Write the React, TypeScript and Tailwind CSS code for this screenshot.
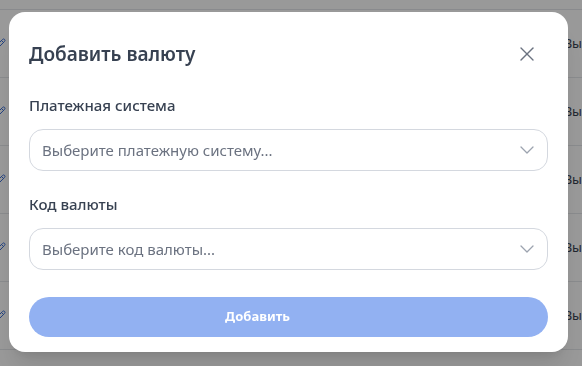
import { X, ChevronDown, Pencil } from 'lucide-react';

const rows = [0, 1, 2, 3, 4];

function SelectBox({ placeholder }: { placeholder: string }) {
  return (
    <button
      type="button"
      className="flex h-[42px] w-full items-center justify-between rounded-[14px] border border-[#d4d8df] bg-white pl-3 pr-2 text-left"
    >
      <span className="text-[15px] text-[#6b7280]">{placeholder}</span>
      <ChevronDown className="h-6 w-6 text-[#9ca3af]" strokeWidth={1.3} />
    </button>
  );
}

export default function App() {
  return (
    <div
      className="relative h-[366px] w-[582px] overflow-hidden bg-white"
      style={{ fontFamily: '"Noto Sans", "Open Sans", Arial, sans-serif' }}
    >
      {/* Page behind the overlay */}
      <div className="pt-[9px]">
        {rows.map((r) => (
          <div
            key={r}
            className="flex h-[69px] items-center justify-between border-b border-t border-[#e5e7eb] -mb-px"
          >
            <Pencil className="-ml-[6px] h-3 w-3 text-[#3b6fd6]" />
            <span className="whitespace-nowrap text-[13px] text-[#374151]">Вы</span>
          </div>
        ))}
      </div>

      {/* Overlay */}
      <div className="fixed inset-0 flex items-start bg-black/40 pl-[9px] pt-[12px]">
        <div className="w-[559px] rounded-2xl bg-white px-5 pb-[15px] pt-6 shadow-xl">
          {/* Header */}
          <div className="flex h-9 items-center justify-between">
            <h2 className="text-[19px] font-semibold text-[#374151]">Добавить валюту</h2>
            <button type="button" className="mr-[3px] flex h-9 w-9 items-center justify-center">
              <X className="h-6 w-6 text-[#6b7280]" strokeWidth={1.4} />
            </button>
          </div>

          {/* Fields */}
          <div className="mt-[22px]">
            <label className="block text-[15px] font-medium leading-[22px] text-[#374151]">
              Платежная система
            </label>
            <div className="mt-[13px]">
              <SelectBox placeholder="Выберите платежную систему..." />
            </div>
          </div>

          <div className="mt-[22px]">
            <label className="block text-[15px] font-medium leading-[22px] text-[#374151]">
              Код валюты
            </label>
            <div className="mt-[13px]">
              <SelectBox placeholder="Выберите код валюты..." />
            </div>
          </div>

          <button
            type="button"
            disabled
            className="mt-[27px] flex h-10 w-full items-center justify-center rounded-[20px] bg-[#92b1f2] pr-[62px] text-[13px] font-bold text-white"
          >
            Добавить
          </button>
        </div>
      </div>
    </div>
  );
}
